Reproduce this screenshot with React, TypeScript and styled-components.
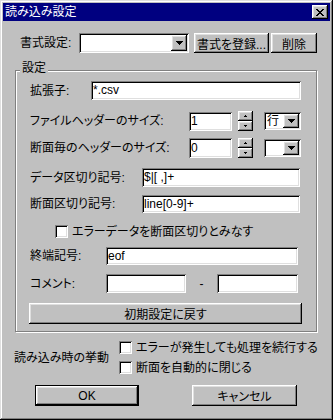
import styled, {createGlobalStyle, css} from 'styled-components';

const GlobalStyle = createGlobalStyle`
  html, body {
    margin: 0;
    padding: 0;
    background: #c0c0c0;
  }
  body {
    font-family: "Liberation Sans", "Noto Sans CJK JP", sans-serif;
    font-size: 12px;
    font-feature-settings: "palt";
    color: #000;
  }
`;

const raised = css`
  background: #c0c0c0;
  box-shadow: inset -1px -1px #000, inset 1px 1px #fff, inset -2px -2px #808080, inset 2px 2px #dfdfdf;
`;

const sunken = css`
  background: #fff;
  box-shadow: inset 1px 1px #808080, inset -1px -1px #fff, inset 2px 2px #000, inset -2px -2px #dfdfdf;
`;

const Window = styled.div`
  box-sizing: border-box;
  width: 333px;
  height: 420px;
  padding: 3px;
  background: #c0c0c0;
  box-shadow: inset -1px -1px #000, inset 1px 1px #dfdfdf, inset -2px -2px #808080, inset 2px 2px #fff;
  display: flex;
  flex-direction: column;
`;

const TitleBar = styled.div`
  height: 18px;
  padding: 0 2px;
  background: #000080;
  color: #fff;
  display: flex;
  align-items: center;
`;

const Title = styled.span`
  line-height: 18px;
`;

const CloseButton = styled.div`
  ${raised};
  margin-left: auto;
  width: 16px;
  height: 14px;
  display: flex;
  align-items: center;
  justify-content: center;
`;

const Row = styled.div<{$mt?: number; $ml?: number; $h?: number}>`
  display: flex;
  align-items: center;
  margin-top: ${({$mt}) => $mt ?? 0}px;
  margin-left: ${({$ml}) => $ml ?? 0}px;
  height: ${({$h}) => ($h ? `${$h}px` : 'auto')};
`;

const Label = styled.span<{$w?: number}>`
  flex: none;
  width: ${({$w}) => ($w ? `${$w}px` : 'auto')};
  white-space: nowrap;
  line-height: 14px;
`;

const Field = styled.div<{$w: number; $h: number}>`
  ${sunken};
  box-sizing: border-box;
  flex: none;
  width: ${({$w}) => $w}px;
  height: ${({$h}) => $h}px;
  padding-left: 2px;
  line-height: ${({$h}) => $h}px;
  white-space: nowrap;
  overflow: hidden;
`;

const Combo = styled.div<{$w: number; $h: number}>`
  ${sunken};
  box-sizing: border-box;
  flex: none;
  width: ${({$w}) => $w}px;
  height: ${({$h}) => $h}px;
  padding: 2px;
  display: flex;
  align-items: stretch;
`;

const ComboText = styled.span`
  flex: 1;
  padding-left: 1px;
  line-height: 14px;
  display: flex;
  align-items: center;
`;

const DropButton = styled.div`
  ${raised};
  flex: none;
  width: 16px;
  display: flex;
  align-items: center;
  justify-content: center;
`;

const Button = styled.div<{$w: number; $h: number; $ml?: number; $default?: boolean}>`
  ${raised};
  box-sizing: border-box;
  flex: none;
  width: ${({$w}) => $w}px;
  height: ${({$h}) => $h}px;
  margin-left: ${({$ml}) => $ml ?? 0}px;
  display: flex;
  align-items: center;
  justify-content: center;
  white-space: nowrap;
  ${({$default}) =>
    $default &&
    css`
      box-shadow: inset 0 0 0 1px #000, inset -2px -2px #000, inset 2px 2px #fff, inset -3px -3px #808080,
        inset 3px 3px #dfdfdf;
    `}
`;

const Spinner = styled.div<{$ml: number}>`
  flex: none;
  margin-left: ${({$ml}) => $ml}px;
  display: flex;
  flex-direction: column;
`;

const SpinButton = styled.div`
  ${raised};
  width: 15px;
  height: 10px;
  display: flex;
  align-items: center;
  justify-content: center;
`;

const Group = styled.div`
  position: relative;
  box-sizing: border-box;
  width: 302px;
  margin: 17px 0 0 12px;
  padding: 10px 0 7px 14px;
  border: 1px solid #808080;
  box-shadow: inset 1px 1px #fff, 1px 1px #fff;
  display: flex;
  flex-direction: column;
`;

const Legend = styled.span`
  position: absolute;
  top: -10px;
  left: 4px;
  padding: 0 2px;
  background: #c0c0c0;
  line-height: 14px;
`;

const Check = styled.div`
  ${sunken};
  flex: none;
  width: 13px;
  height: 13px;
`;

const CheckText = styled.span`
  margin-left: 4px;
  white-space: nowrap;
  line-height: 14px;
`;

const Dash = styled.span`
  flex: none;
  width: 31px;
  text-align: center;
`;

const Behavior = styled.div`
  display: flex;
  align-items: center;
  margin: 9px 0 0 11px;
`;

const CheckList = styled.div`
  display: flex;
  flex-direction: column;
  gap: 7px;
`;

const CheckRow = styled.div`
  display: flex;
  align-items: center;
  height: 13px;
`;

const CloseIcon = () => (
  <svg width="8" height="7" viewBox="0 0 8 7" shapeRendering="crispEdges">
    <path d="M0 0h2v1H0zM6 0h2v1H6zM1 1h2v1H1zM5 1h2v1H5zM2 2h4v1H2zM3 3h2v1H3zM2 4h4v1H2zM1 5h2v1H1zM5 5h2v1H5zM0 6h2v1H0zM6 6h2v1H6z" fill="#000" />
  </svg>
);

const DownArrow = () => (
  <svg width="7" height="4" viewBox="0 0 7 4" shapeRendering="crispEdges">
    <path d="M0 0h7v1H0zM1 1h5v1H1zM2 2h3v1H2zM3 3h1v1H3z" fill="#000" />
  </svg>
);

const SmallArrow = ({up}: {up?: boolean}) => (
  <svg width="3" height="2" viewBox="0 0 3 2" shapeRendering="crispEdges">
    <path d={up ? 'M1 0h1v1H1zM0 1h3v1H0z' : 'M0 0h3v1H0zM1 1h1v1H1z'} fill="#000" />
  </svg>
);

const SpinBox = ({ml}: {ml: number}) => (
  <Spinner $ml={ml}>
    <SpinButton><SmallArrow up /></SpinButton>
    <SpinButton><SmallArrow /></SpinButton>
  </Spinner>
);

const DropDown = ({w, h, value}: {w: number; h: number; value?: string}) => (
  <Combo $w={w} $h={h}>
    <ComboText>{value}</ComboText>
    <DropButton><DownArrow /></DropButton>
  </Combo>
);

export default function App() {
  return (
    <>
      <GlobalStyle />
      <Window>
        <TitleBar>
          <Title>読み込み設定</Title>
          <CloseButton><CloseIcon /></CloseButton>
        </TitleBar>

        <Row $mt={12} $ml={17} $h={20}>
          <Label $w={59}>書式設定:</Label>
          <DropDown w={110} h={20} />
          <Button $w={75} $h={20} $ml={5}>書式を登録...</Button>
          <Button $w={46} $h={20} $ml={2}>削除</Button>
        </Row>

        <Group>
          <Legend>設定</Legend>
          <Row $h={19}>
            <Label $w={61}>拡張子:</Label>
            <Field $w={210} $h={19}>*.csv</Field>
          </Row>
          <Row $mt={11} $h={20}>
            <Label $w={159}>ファイルヘッダーのサイズ:</Label>
            <Field $w={43} $h={19}>1</Field>
            <SpinBox ml={6} />
            <Row $ml={11}><DropDown w={37} h={18} value="行" /></Row>
          </Row>
          <Row $mt={7} $h={20}>
            <Label $w={159}>断面毎のヘッダーのサイズ:</Label>
            <Field $w={43} $h={20}>0</Field>
            <SpinBox ml={6} />
            <Row $ml={11}><DropDown w={37} h={18} /></Row>
          </Row>
          <Row $mt={10} $h={19}>
            <Label $w={112}>データ区切り記号:</Label>
            <Field $w={158} $h={19}>$|[ ,]+</Field>
          </Row>
          <Row $mt={8} $h={18}>
            <Label $w={112}>断面区切り記号:</Label>
            <Field $w={158} $h={18}>line[0-9]+</Field>
          </Row>
          <Row $mt={12} $ml={25} $h={13}>
            <Check />
            <CheckText>エラーデータを断面区切りとみなす</CheckText>
          </Row>
          <Row $mt={9} $h={18}>
            <Label $w={76}>終端記号:</Label>
            <Field $w={192} $h={18}>eof</Field>
          </Row>
          <Row $mt={9} $h={19}>
            <Label $w={76}>コメント:</Label>
            <Field $w={80} $h={19} />
            <Dash>-</Dash>
            <Field $w={81} $h={19} />
          </Row>
          <Row $mt={10} $ml={-1} $h={21}>
            <Button $w={273} $h={21}>初期設定に戻す</Button>
          </Row>
        </Group>

        <Behavior>
          <Label $w={105}>読み込み時の挙動</Label>
          <CheckList>
            <CheckRow>
              <Check />
              <CheckText>エラーが発生しても処理を続行する</CheckText>
            </CheckRow>
            <CheckRow>
              <Check />
              <CheckText>断面を自動的に閉じる</CheckText>
            </CheckRow>
          </CheckList>
        </Behavior>

        <Row $mt={11} $ml={32} $h={21}>
          <Button $w={104} $h={21} $default>OK</Button>
          <Button $w={105} $h={21} $ml={53}>キャンセル</Button>
        </Row>
      </Window>
    </>
  );
}
